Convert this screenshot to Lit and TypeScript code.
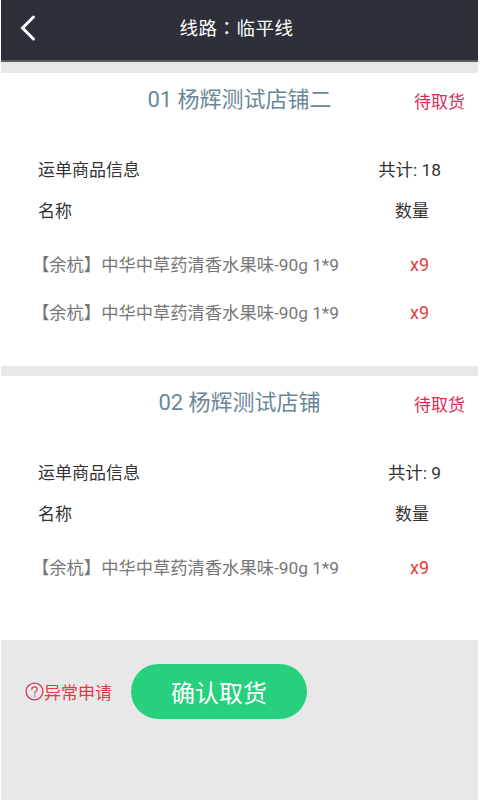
import { LitElement, html, css, svg } from "lit";
import { customElement } from "lit/decorators.js";

interface Shop { title: string; total: number; items: string[]; }

const ITEM = "【余杭】中华中草药清香水果味-90g 1*9";
const SHOPS: Shop[] = [
  { title: "01 杨辉测试店铺二", total: 18, items: [ITEM, ITEM] },
  { title: "02 杨辉测试店铺", total: 9, items: [ITEM] },
];

@customElement("app-root")
export class AppRoot extends LitElement {
  static styles = css`
    :host {
      display: block;
      width: 480px;
      height: 800px;
      overflow: hidden;
      background: #fff;
      font-family: Roboto, "Noto Sans CJK SC", sans-serif;
    }
    .page {
      display: flex;
      flex-direction: column;
      height: 800px;
      margin: 0 2px 0 1px;
      background: #e8e8e8;
    }
    .header {
      flex: none;
      box-sizing: border-box;
      height: 62px;
      padding: 0 6px 6px 0;
      border-bottom: 2px solid #5a5d63;
      background: #2d3039;
      display: flex;
      align-items: center;
      justify-content: center;
      position: relative;
      color: #fff;
      font-family: "Noto Sans CJK JP", sans-serif;
      font-size: 18.5px;
      letter-spacing: 0.5px;
    }
    .back {
      position: absolute;
      left: 18px;
      top: 14px;
      width: 18px;
      height: 28px;
    }
    .sep { flex: none; height: 11px; }
    .gap { flex: none; height: 10px; }
    .card {
      flex: none;
      background: #fff;
      box-sizing: border-box;
      padding: 0 13px 0 37px;
    }
    .card.a { height: 293px; }
    .card.b { height: 264px; }
    .title-row {
      height: 54px;
      display: flex;
      align-items: center;
      justify-content: space-between;
      position: relative;
    }
    .title {
      position: absolute;
      left: 0;
      right: 0;
      margin-left: -37px;
      margin-right: -13px;
      padding-bottom: 6px;
      text-align: center;
      font-size: 22px;
      color: #6b8797;
    }
    .status {
      position: absolute;
      right: 0;
      font-size: 17px;
      color: #dd2a55;
    }
    .row {
      display: flex;
      justify-content: space-between;
      align-items: center;
      padding-right: 36px;
      color: #333;
      font-size: 17px;
      height: 24px;
    }
    .row.info { margin-top: 29px; padding-right: 24px; }
    .total { font-size: 17.4px; }
    .row.head { margin-top: 17px; margin-bottom: 18px; }
    .item {
      display: flex;
      justify-content: space-between;
      align-items: center;
      height: 48px;
      padding-right: 36px;
      margin-left: -6px;
      font-size: 17.3px;
      color: #777;
    }
    .qty { color: #e53935; font-size: 18px; padding-top: 3px; }
    .footer {
      flex: 1;
      display: flex;
      align-items: flex-start;
      padding: 24px 0 0 24px;
    }
    .report {
      display: flex;
      align-items: center;
      height: 54px;
      color: #e63946;
      font-size: 17px;
    }
    .report svg { width: 19px; height: 19px; flex: none; }
    .confirm {
      margin-left: 19px;
      width: 176px;
      height: 55px;
      border: none;
      border-radius: 28px;
      background: #26d07c;
      color: #fff;
      font: inherit;
      font-size: 24px;
      padding: 0;
    }
  `;

  private card(s: Shop, cls: string) {
    return html`
      <section class="card ${cls}">
        <div class="title-row">
          <span class="title">${s.title}</span>
          <span class="status">待取货</span>
        </div>
        <div class="row info"><span>运单商品信息</span><span class="total">共计: ${s.total}</span></div>
        <div class="row head"><span>名称</span><span>数量</span></div>
        ${s.items.map(
          (i) => html`<div class="item"><span>${i}</span><span class="qty">x9</span></div>`
        )}
      </section>
    `;
  }

  render() {
    return html`
      <div class="page">
        <header class="header">
          <svg class="back" viewBox="0 0 18 28" fill="none">
            ${svg`<path d="M14.5 3 L3.5 14 L14.5 25" stroke="#fff" stroke-width="3" stroke-linecap="round" stroke-linejoin="miter"/>`}
          </svg>
          <span>线路：临平线</span>
        </header>
        <div class="sep"></div>
        ${this.card(SHOPS[0], "a")}
        <div class="gap"></div>
        ${this.card(SHOPS[1], "b")}
        <footer class="footer">
          <div class="report">
            <svg viewBox="0 0 19 19" fill="none">
              ${svg`<circle cx="9.5" cy="9.5" r="8.4" stroke="#e0335a" stroke-width="1.3"/>
              <path d="M6.8 7.4 C6.8 5.7 8 4.8 9.5 4.8 C11.1 4.8 12.2 5.8 12.2 7.2 C12.2 9 9.6 9.3 9.6 11.6" stroke="#e0335a" stroke-width="1.2" stroke-linecap="round"/>
              <circle cx="9.6" cy="14" r="0.8" fill="#e0335a"/>`}
            </svg>
            <span>异常申请</span>
          </div>
          <button class="confirm">确认取货</button>
        </footer>
      </div>
    `;
  }
}
